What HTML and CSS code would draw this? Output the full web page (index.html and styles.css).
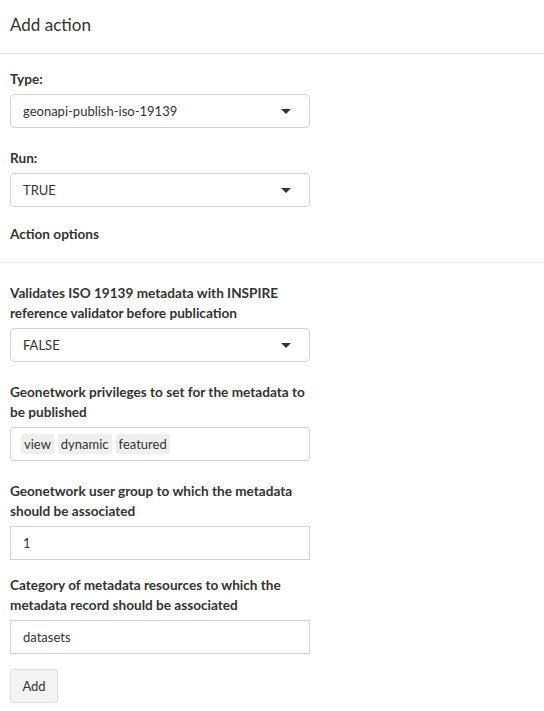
FILE: index.html
```html
<!DOCTYPE html>
<html>
<head>
<meta charset="utf-8">
<title>Add action</title>
<link rel="stylesheet" href="styles.css">
</head>
<body>
<div class="modal">
  <div class="modal-header">
    <h4 class="modal-title">Add action</h4>
  </div>
  <div class="modal-body">
    <div class="form-group sel">
      <label class="label">Type:</label>
      <div class="select"><span class="value">geonapi-publish-iso-19139</span><span class="caret"></span></div>
    </div>
    <div class="form-group sel">
      <label class="label">Run:</label>
      <div class="select"><span class="value">TRUE</span><span class="caret"></span></div>
    </div>
    <div class="section-title">Action options</div>
    <hr class="divider">
    <div class="form-group sel">
      <label class="label">Validates ISO 19139 metadata with INSPIRE<br>reference validator before publication</label>
      <div class="select"><span class="value">FALSE</span><span class="caret"></span></div>
    </div>
    <div class="form-group sel">
      <label class="label">Geonetwork privileges to set for the metadata to<br>be published</label>
      <div class="select multi"><span class="chip">view</span><span class="chip">dynamic</span><span class="chip">featured</span></div>
    </div>
    <div class="form-group">
      <label class="label">Geonetwork user group to which the metadata<br>should be associated</label>
      <div class="text-input">1</div>
    </div>
    <div class="form-group">
      <label class="label">Category of metadata resources to which the<br>metadata record should be associated</label>
      <div class="text-input">datasets</div>
    </div>
    <button class="btn">Add</button>
  </div>
</div>
</body>
</html>
```
FILE: styles.css
```css
html, body {
  margin: 0;
  padding: 0;
  background: #ffffff;
}
body {
  font-family: Lato, "Open Sans", sans-serif;
  color: #333333;
  font-size: 14px;
}
.modal-header {
  padding: 15px 10px 18px;
  border-bottom: 1px solid #e8e8e8;
}
.modal-title {
  margin: 0;
  font-size: 17px;
  font-weight: 400;
  line-height: 20px;
  color: #333333;
}
.modal-body {
  padding: 15px 10px 10px;
}
.form-group {
  margin-bottom: 15px;
  width: 300px;
}
.form-group.sel {
  margin-bottom: 20px;
}
.label {
  display: block;
  font-size: 13.6px;
  font-weight: 700;
  line-height: 20px;
  margin-bottom: 5px;
  white-space: nowrap;
}
.select, .text-input {
  box-sizing: border-box;
  height: 34px;
  width: 300px;
  border: 1px solid #d2d2d2;
  border-radius: 4px;
  display: flex;
  align-items: center;
  padding: 0 12px;
  font-size: 13px;
  position: relative;
}
.text-input {
  border-radius: 0;
}
.select .value {
  flex: 1;
}
.caret {
  width: 0;
  height: 0;
  border-style: solid;
  border-width: 5px 5px 0;
  border-color: #333333 transparent transparent;
  margin-right: 6px;
}
.select.multi {
  padding: 0 10px;
  gap: 4px;
}
.chip {
  background: #efefef;
  border-radius: 2px;
  padding: 0 3px;
  line-height: 20px;
  color: #333333;
}
.section-title {
  font-size: 13.6px;
  font-weight: 700;
  line-height: 20px;
  margin-top: -3px;
}
.divider {
  border: 0;
  border-top: 1px solid #eeeeee;
  margin: 18px -10px 20px;
}
.btn {
  display: block;
  height: 34px;
  width: 48px;
  box-sizing: border-box;
  background: #f4f4f4;
  border: 1px solid #dddddd;
  border-radius: 3px;
  font-family: inherit;
  font-size: 13px;
  color: #333333;
  padding: 0;
}
```
